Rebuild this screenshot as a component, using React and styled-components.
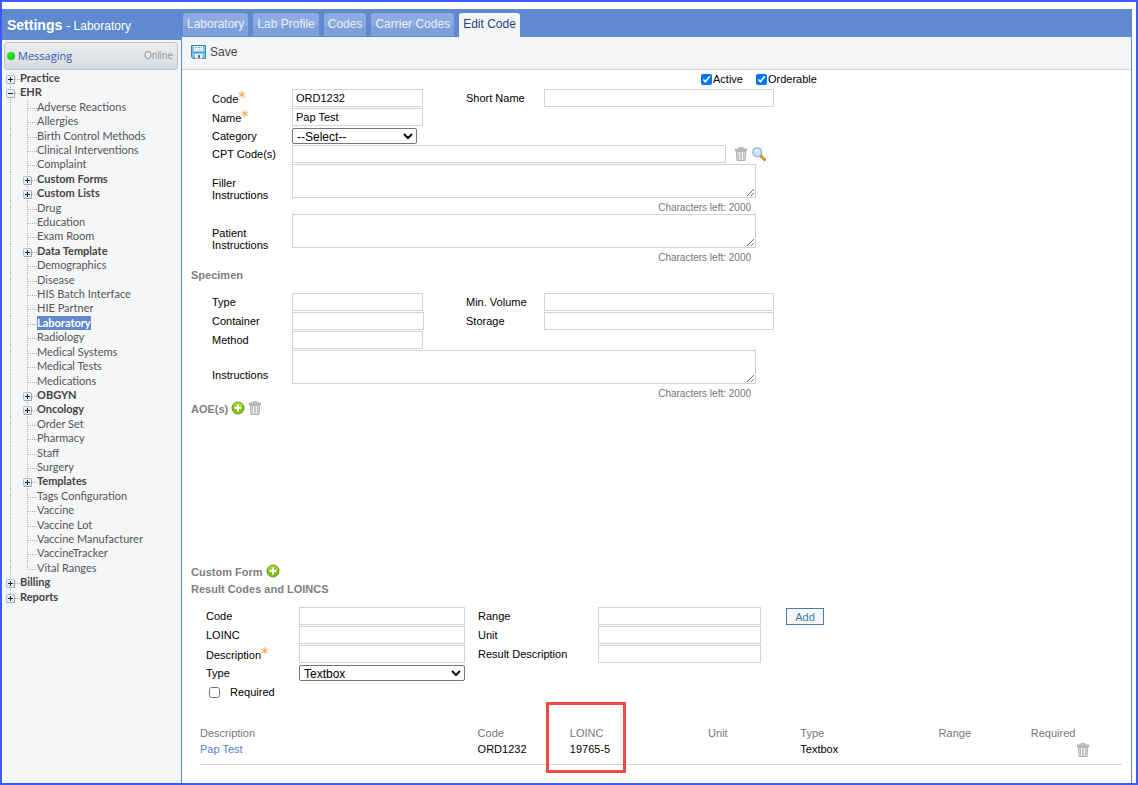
import { useState } from "react";
import styled, { createGlobalStyle, css } from "styled-components";

const GlobalStyle = createGlobalStyle`
  * {
    box-sizing: border-box;
  }
  body {
    margin: 0;
    background: #fff;
    color: #000;
    font-family: "Liberation Sans", Arial, sans-serif;
    font-size: 11px;
    line-height: 12px;
  }
  a {
    color: inherit;
    text-decoration: none;
  }
`;

const Page = styled.div`
  display: grid;
  grid-template-columns: 180px 1fr;
  min-height: 100vh;
  padding: 7px 4px 0 0;
  border: 2px solid #3d5afe;
`;

/* ---------- sidebar ---------- */

const Sidebar = styled.aside`
  display: flex;
  flex-direction: column;
  background: #f4f6f8;
  border-right: 1px solid #5f8ad0;
`;

const SidebarHeader = styled.header`
  display: flex;
  align-items: baseline;
  gap: 4px;
  height: 31px;
  padding: 8px 0 0 5px;
  margin-right: -1px;
  background: #5f8ad0;
  color: #fff;
  font-size: 12px;
  line-height: 16px;
`;

const SidebarTitle = styled.h1`
  margin: 0;
  font-size: 14px;
  font-weight: bold;
`;

const Messaging = styled.div`
  display: flex;
  align-items: center;
  gap: 3px;
  height: 28px;
  margin: 2px 3px 1px 2px;
  padding: 0 4px 0 2px;
  border: 1px solid #c3c5c8;
  border-radius: 3px;
  background: linear-gradient(#ebedef, #d9dcdf);
`;

const StatusDot = styled.span`
  width: 8px;
  height: 8px;
  border-radius: 50%;
  background: radial-gradient(circle at 40% 35%, #2cf02c, #08b808);
`;

const MessagingLink = styled.a`
  flex: 1;
  color: #3559b5;
  font-family: "Open Sans", sans-serif;
  font-size: 11px;
`;

const Online = styled.span`
  color: #999;
  font-size: 10px;
`;

const Tree = styled.ul`
  display: grid;
  grid-auto-rows: 1fr;
  height: 533px;
  margin: 0;
  padding: 0 0 0 1px;
  list-style: none;
  color: #555;
  font-family: Lato, "Open Sans", sans-serif;
  font-size: 11px;
`;

const TreeRow = styled.li`
  display: flex;
  min-width: 0;
`;

const dotsDown = "repeating-linear-gradient(to bottom, #b3b3a8 0 1px, transparent 1px 2px)";
const dotsAcross = "repeating-linear-gradient(to right, #b3b3a8 0 1px, transparent 1px 2px)";

const Gutter = styled.span`
  display: flex;
  flex: none;
  width: 17px;
  padding: 4px 0 0 3px;
  background-repeat: no-repeat;
  ${({ $branch, $last, $first }) => css`
    background-image: ${dotsDown}${$branch ? `, ${dotsAcross}` : ""};
    background-position: 7px ${$first ? "8px" : "0"}, 8px 8px;
    background-size: 1px ${$last ? "8px" : "100%"}, 9px 1px;
  `}
`;

const Expander = styled.button`
  display: block;
  width: 9px;
  height: 9px;
  padding: 0;
  border: 0;
  background: none;
`;

const TreeLink = styled.a`
  line-height: 14px;
  white-space: nowrap;
  font-weight: ${({ $bold }) => ($bold ? "bold" : "normal")};
  color: ${({ $active, $bold }) => ($active ? "#fff" : $bold ? "#444" : "inherit")};
  background: ${({ $active }) => ($active ? "#5f8ad0" : "none")};
`;

/* ---------- main area ---------- */

const Main = styled.main`
  min-width: 0;
  border-right: 1px solid #5f8ad0;
`;

const Tabs = styled.nav`
  display: flex;
  gap: 5px;
  height: 28px;
  padding: 4px 0 0 1px;
  background: #5f8ad0;
`;

const Tab = styled.a`
  height: ${({ $active }) => ($active ? 24 : 23)}px;
  padding: 0 4px;
  border-radius: 3px 3px 0 0;
  font-size: 12px;
  line-height: 22px;
  color: ${({ $active }) => ($active ? "#1c4578" : "#e8eefa")};
  background: ${({ $active }) =>
    $active ? "#f4f5f7" : "linear-gradient(#8eabdf 50%, #7d9fda 60%)"};
`;

const Toolbar = styled.div`
  height: 33px;
  padding: 6px 0 0 9px;
  background: #f4f5f7;
  border-bottom: 1px solid #d3d5d7;
`;

const SaveButton = styled.button`
  display: flex;
  align-items: center;
  gap: 4px;
  padding: 0;
  border: 0;
  background: none;
  color: #444;
  font: 12px/18px "Liberation Sans", Arial, sans-serif;
`;

const Flags = styled.div`
  display: flex;
  gap: 13px;
  height: 19px;
  padding: 3px 0 0 519px;
`;

const CheckLabel = styled.label`
  display: flex;
  align-items: center;
  gap: ${({ $wide }) => ($wide ? 10 : 1)}px;
  height: 12px;
`;

const Checkbox = styled.input`
  width: 11px;
  height: 11px;
  margin: 0;
`;

const Form = styled.form`
  display: grid;
  grid-template-columns: ${({ $columns }) => $columns};
  align-items: center;
  row-gap: 1px;
  margin-top: ${({ $top }) => $top || 0}px;
  padding-left: ${({ $indent }) => $indent}px;
`;

const Label = styled.label`
  grid-column: 1;
  width: 70px;

  &[data-side] {
    grid-column: 3;
    width: auto;
  }
`;

const Star = styled.span`
  color: #ffa43c;
  font-family: "DejaVu Sans", sans-serif;
  font-size: 15px;
  line-height: 12px;
`;

const TextBox = styled.input`
  width: ${({ $width }) => $width}px;
  height: 18px;
  padding: 0 3px;
  border: 1px solid #d3d3d3;
  background: #fff;
  color: #000;
  font: 11px "Liberation Sans", Arial, sans-serif;
`;

const Select = styled.select`
  align-self: end;
  width: ${({ $width }) => $width}px;
  height: 16px;
  margin-top: 1px;
  padding: 0;
  border: 1px solid #767676;
  border-radius: 2px;
  background: #fff;
  color: #000;
  font: 12px "Liberation Sans", Arial, sans-serif;
`;

const WideCell = styled.div`
  grid-column: 2 / -1;
  display: flex;
  align-items: center;
  gap: 4px;
`;

const CptBox = styled(TextBox)`
  margin-right: 4px;
`;

const NoteCell = styled.div`
  grid-column: 2 / -1;
  width: 464px;
`;

const TextArea = styled.textarea`
  display: block;
  width: 100%;
  height: 34px;
  border: 1px solid #d3d3d3;
  font: 11px "Liberation Sans", Arial, sans-serif;
`;

const Note = styled.div`
  padding: 5px 5px 0 0;
  color: #777;
  font-size: 10px;
  line-height: 10px;
  text-align: right;
`;

const IconButton = styled.button`
  display: block;
  width: 14px;
  height: 14px;
  padding: 0;
  border: 0;
  background: none;

  svg {
    display: block;
  }
`;

const SectionTitle = styled.h2`
  display: flex;
  gap: 3px;
  margin: 0;
  padding: ${({ $pad }) => $pad || 0}px 0 0 9px;
  color: #808080;
  font-size: 11px;
  font-weight: bold;
  line-height: 16px;
`;

const AoeSection = styled.section`
  min-height: 165px;
`;

const AddButton = styled.button`
  grid-column: 5;
  width: 38px;
  height: 17px;
  padding: 1px 0 0;
  border: 1px solid #4a7ab5;
  background: #f7f7f7;
  color: #4a7ab5;
  font: 11px "Liberation Sans", Arial, sans-serif;
`;

const RequiredRow = styled.div`
  grid-column: 1 / -1;
  padding: 4px 0 0 3px;
`;

const ResultTable = styled.table`
  width: calc(100% - 27px);
  margin: 27px 9px 0 18px;
  table-layout: fixed;
  border-collapse: collapse;
  border-bottom: 1px solid #d3d3d3;
`;

const HeadCell = styled.th`
  position: relative;
  width: ${({ $width }) => $width};
  height: 15px;
  padding: 0 0 0 1px;
  color: #777;
  font-weight: normal;
  text-align: left;

  &:first-child {
    padding-left: 0;
  }
`;

const Cell = styled.td`
  height: 24px;
  padding: 3px 0 0 ${({ $pad = 1 }) => $pad}px;
  vertical-align: top;
`;

const DescriptionLink = styled.a`
  color: #5585d0;
`;

const Highlight = styled.span`
  position: absolute;
  top: -23px;
  left: -23px;
  width: 80px;
  height: 71px;
  border: 3px solid #e84c44;
  pointer-events: none;
`;

/* ---------- icons ---------- */

const Glyph = styled.svg`
  display: block;
  flex: none;
`;

const ExpanderIcon = ({ open }) => (
  <Glyph width="9" height="9" viewBox="0 0 9 9">
    <rect x="0.5" y="0.5" width="8" height="8" rx="1" fill="#e6ecf2" stroke="#aebfd0" />
    <path d="M1 8.500h7.500V1" stroke="#98a8b8" fill="none" />
    <path d={open ? "M2 4.500h5" : "M2 4.500h5M4.500 2v5"} stroke="#222" fill="none" />
  </Glyph>
);

const SaveIcon = () => (
  <Glyph width="15" height="14" viewBox="0 0 15 14">
    <path d="M0.500 0.500h14v13h-12.500l-1.500-1.500z" fill="#7cc4ec" stroke="#3585b8" />
    <path d="M3 1h9v5h-9z" fill="#f1f5f7" />
    <path d="M4 2.500h7" stroke="#a2acb3" strokeDasharray="2 1" />
    <path d="M4 4.500h7" stroke="#cdd4d8" />
    <path d="M1 7.500h13" stroke="#49a7de" />
    <path d="M4 9h7.500v4.500h-7.500z" fill="#eef1f3" />
    <path d="M7 10h2v3h-2z" fill="#5a6c78" />
  </Glyph>
);

const TrashIcon = () => (
  <Glyph width="14" height="14" viewBox="0 0 14 14">
    <path d="M5 1.800V0.700h4v1.100" fill="none" stroke="#a5a5a5" />
    <path d="M1.500 2h11v1.800h-11z" fill="#d4d4d4" stroke="#a5a5a5" />
    <path d="M2.500 4.200h9l-0.500 9.200h-8z" fill="#dedede" stroke="#acacac" />
    <path d="M4.700 5.500v6.500M9.300 5.500v6.500" stroke="#b5b5b5" />
    <path d="M5.800 5.500v6.500M8.300 5.500v6.500" stroke="#fff" />
    <path d="M7 5.500v6.500" stroke="#a5a5a5" />
  </Glyph>
);

const SearchIcon = () => (
  <Glyph width="14" height="14" viewBox="0 0 14 14">
    <path d="M9 9l3.500 3.500" stroke="#c87a1e" strokeWidth="3" strokeLinecap="round" />
    <path d="M9.500 9l3.200 3.200" stroke="#f5b04c" strokeWidth="1.200" />
    <circle cx="5.200" cy="5.200" r="4.400" fill="#cfe5fa" stroke="#8fadd4" strokeWidth="1.200" />
    <path d="M2.800 4.800a2.600 2.600 0 0 1 3-2" stroke="#fff" fill="none" />
  </Glyph>
);

const PlusIcon = () => (
  <Glyph width="14" height="14" viewBox="0 0 14 14">
    <circle cx="7" cy="7" r="6" fill="#84c018" stroke="#589a10" />
    <path d="M2 6a5 4.500 0 0 1 10 0z" fill="#a2d43c" />
    <path d="M7 3.500v7M3.500 7h7" stroke="#fff" strokeWidth="2" />
  </Glyph>
);

/* ---------- data ---------- */

// a leading plus marks a collapsed group
const ehrItems = [
  "Adverse Reactions", "Allergies", "Birth Control Methods", "Clinical Interventions",
  "Complaint", "+Custom Forms", "+Custom Lists", "Drug", "Education", "Exam Room",
  "+Data Template", "Demographics", "Disease", "HIS Batch Interface", "HIE Partner",
  "Laboratory", "Radiology", "Medical Systems", "Medical Tests", "Medications",
  "+OBGYN", "+Oncology", "Order Set", "Pharmacy", "Staff", "Surgery", "+Templates",
  "Tags Configuration", "Vaccine", "Vaccine Lot", "Vaccine Manufacturer",
  "VaccineTracker", "Vital Ranges",
];

const tabs = ["Laboratory", "Lab Profile", "Codes", "Carrier Codes", "Edit Code"];

const columns = [
  ["Description", "30%"],
  ["Code", "10%"],
  ["LOINC", "15%"],
  ["Unit", "10%"],
  ["Type", "15%"],
  ["Range", "10%"],
  ["Required", "10%"],
];

const RootItem = ({ name, open, first, last }) => (
  <TreeRow>
    <Gutter $branch $first={first} $last={last}>
      <Expander aria-label={`Toggle ${name}`}><ExpanderIcon open={open} /></Expander>
    </Gutter>
    <TreeLink href="#" $bold>{name}</TreeLink>
  </TreeRow>
);

const ChildItem = ({ item, last }) => {
  const isGroup = item.startsWith("+");
  const name = isGroup ? item.slice(1) : item;
  const active = name === "Laboratory";
  return (
    <TreeRow>
      <Gutter />
      <Gutter $branch $last={last}>
        {isGroup && <Expander aria-label={`Toggle ${name}`}><ExpanderIcon /></Expander>}
      </Gutter>
      <TreeLink href="#" $bold={isGroup || active} $active={active}>{name}</TreeLink>
    </TreeRow>
  );
};

const Field = ({ id, label, width, side, required, value = "" }) => {
  const [text, setText] = useState(value);
  return (
    <>
      <Label htmlFor={id} data-side={side}>
        {label}{required && <Star>*</Star>}
      </Label>
      <TextBox id={id} $width={width} value={text} onChange={(e) => setText(e.target.value)} />
    </>
  );
};

const NoteField = ({ id, label }) => (
  <>
    <Label htmlFor={id}>{label}</Label>
    <NoteCell>
      <TextArea id={id} />
      <Note>Characters left: 2000</Note>
    </NoteCell>
  </>
);

function App() {
  return (
    <>
      <GlobalStyle />
      <Page>
        <Sidebar>
          <SidebarHeader>
            <SidebarTitle>Settings</SidebarTitle>
            <span>- Laboratory</span>
          </SidebarHeader>
          <Messaging>
            <StatusDot />
            <MessagingLink href="#">Messaging</MessagingLink>
            <Online>Online</Online>
          </Messaging>
          <Tree>
            <RootItem name="Practice" first />
            <RootItem name="EHR" open />
            {ehrItems.map((item, index) => (
              <ChildItem key={item} item={item} last={index === ehrItems.length - 1} />
            ))}
            <RootItem name="Billing" />
            <RootItem name="Reports" last />
          </Tree>
        </Sidebar>

        <Main>
          <Tabs>
            {tabs.map((tab) => (
              <Tab key={tab} href="#" $active={tab === "Edit Code"}>{tab}</Tab>
            ))}
          </Tabs>
          <Toolbar>
            <SaveButton><SaveIcon />Save</SaveButton>
          </Toolbar>

          <Flags>
            <CheckLabel><Checkbox type="checkbox" defaultChecked />Active</CheckLabel>
            <CheckLabel><Checkbox type="checkbox" defaultChecked />Orderable</CheckLabel>
          </Flags>
          <Form $columns="80px 174px 78px 1fr" $indent={30}>
            <Field id="code" label="Code" width={131} required value="ORD1232" />
            <Field id="short-name" label="Short Name" width={230} side="right" />
            <Field id="name" label="Name" width={131} required value="Pap Test" />
            <Label htmlFor="category">Category</Label>
            <Select id="category" $width={125}>
              <option>--Select--</option>
            </Select>
            <Label htmlFor="cpt">CPT Code(s)</Label>
            <WideCell>
              <CptBox id="cpt" $width={434} />
              <IconButton type="button" aria-label="Clear CPT codes"><TrashIcon /></IconButton>
              <IconButton type="button" aria-label="Find CPT codes"><SearchIcon /></IconButton>
            </WideCell>
            <NoteField id="filler" label="Filler Instructions" />
            <NoteField id="patient" label="Patient Instructions" />
          </Form>

          <SectionTitle $pad={4}>Specimen</SectionTitle>
          <Form $columns="80px 174px 78px 1fr" $indent={30} $top={10}>
            <Field id="specimen-type" label="Type" width={131} />
            <Field id="volume" label="Min. Volume" width={230} side="right" />
            <Field id="container" label="Container" width={132} />
            <Field id="storage" label="Storage" width={230} side="right" />
            <Field id="method" label="Method" width={131} />
            <NoteField id="specimen-instructions" label="Instructions" />
          </Form>

          <AoeSection>
            <SectionTitle $pad={2}>
              AOE(s)
              <IconButton aria-label="Add AOE"><PlusIcon /></IconButton>
              <IconButton aria-label="Delete AOE"><TrashIcon /></IconButton>
            </SectionTitle>
          </AoeSection>

          <SectionTitle>
            Custom Form
            <IconButton aria-label="Add custom form"><PlusIcon /></IconButton>
          </SectionTitle>
          <SectionTitle $pad={1}>Result Codes and LOINCS</SectionTitle>
          <Form $columns="93px 179px 120px 188px 1fr" $indent={24} $top={10}>
            <Field id="result-code" label="Code" width={166} />
            <Field id="range" label="Range" width={163} side="right" />
            <AddButton type="button">Add</AddButton>
            <Field id="loinc" label="LOINC" width={166} />
            <Field id="unit" label="Unit" width={163} side="right" />
            <Field id="description" label="Description" width={166} required />
            <Field id="result-description" label="Result Description" width={163} side="right" />
            <Label htmlFor="result-type">Type</Label>
            <Select id="result-type" $width={166}>
              <option>Textbox</option>
            </Select>
            <RequiredRow>
              <CheckLabel $wide><Checkbox type="checkbox" />Required</CheckLabel>
            </RequiredRow>
          </Form>

          <ResultTable>
            <thead>
              <tr>
                {columns.map(([name, width]) => (
                  <HeadCell key={name} $width={width}>
                    {name}
                    {name === "LOINC" && <Highlight />}
                  </HeadCell>
                ))}
              </tr>
            </thead>
            <tbody>
              <tr>
                <Cell $pad={0}><DescriptionLink href="#">Pap Test</DescriptionLink></Cell>
                <Cell>ORD1232</Cell>
                <Cell>19765-5</Cell>
                <Cell />
                <Cell>Textbox</Cell>
                <Cell />
                <Cell $pad={46}>
                  <IconButton aria-label="Delete Pap Test"><TrashIcon /></IconButton>
                </Cell>
              </tr>
            </tbody>
          </ResultTable>
        </Main>
      </Page>
    </>
  );
}

export default App;
